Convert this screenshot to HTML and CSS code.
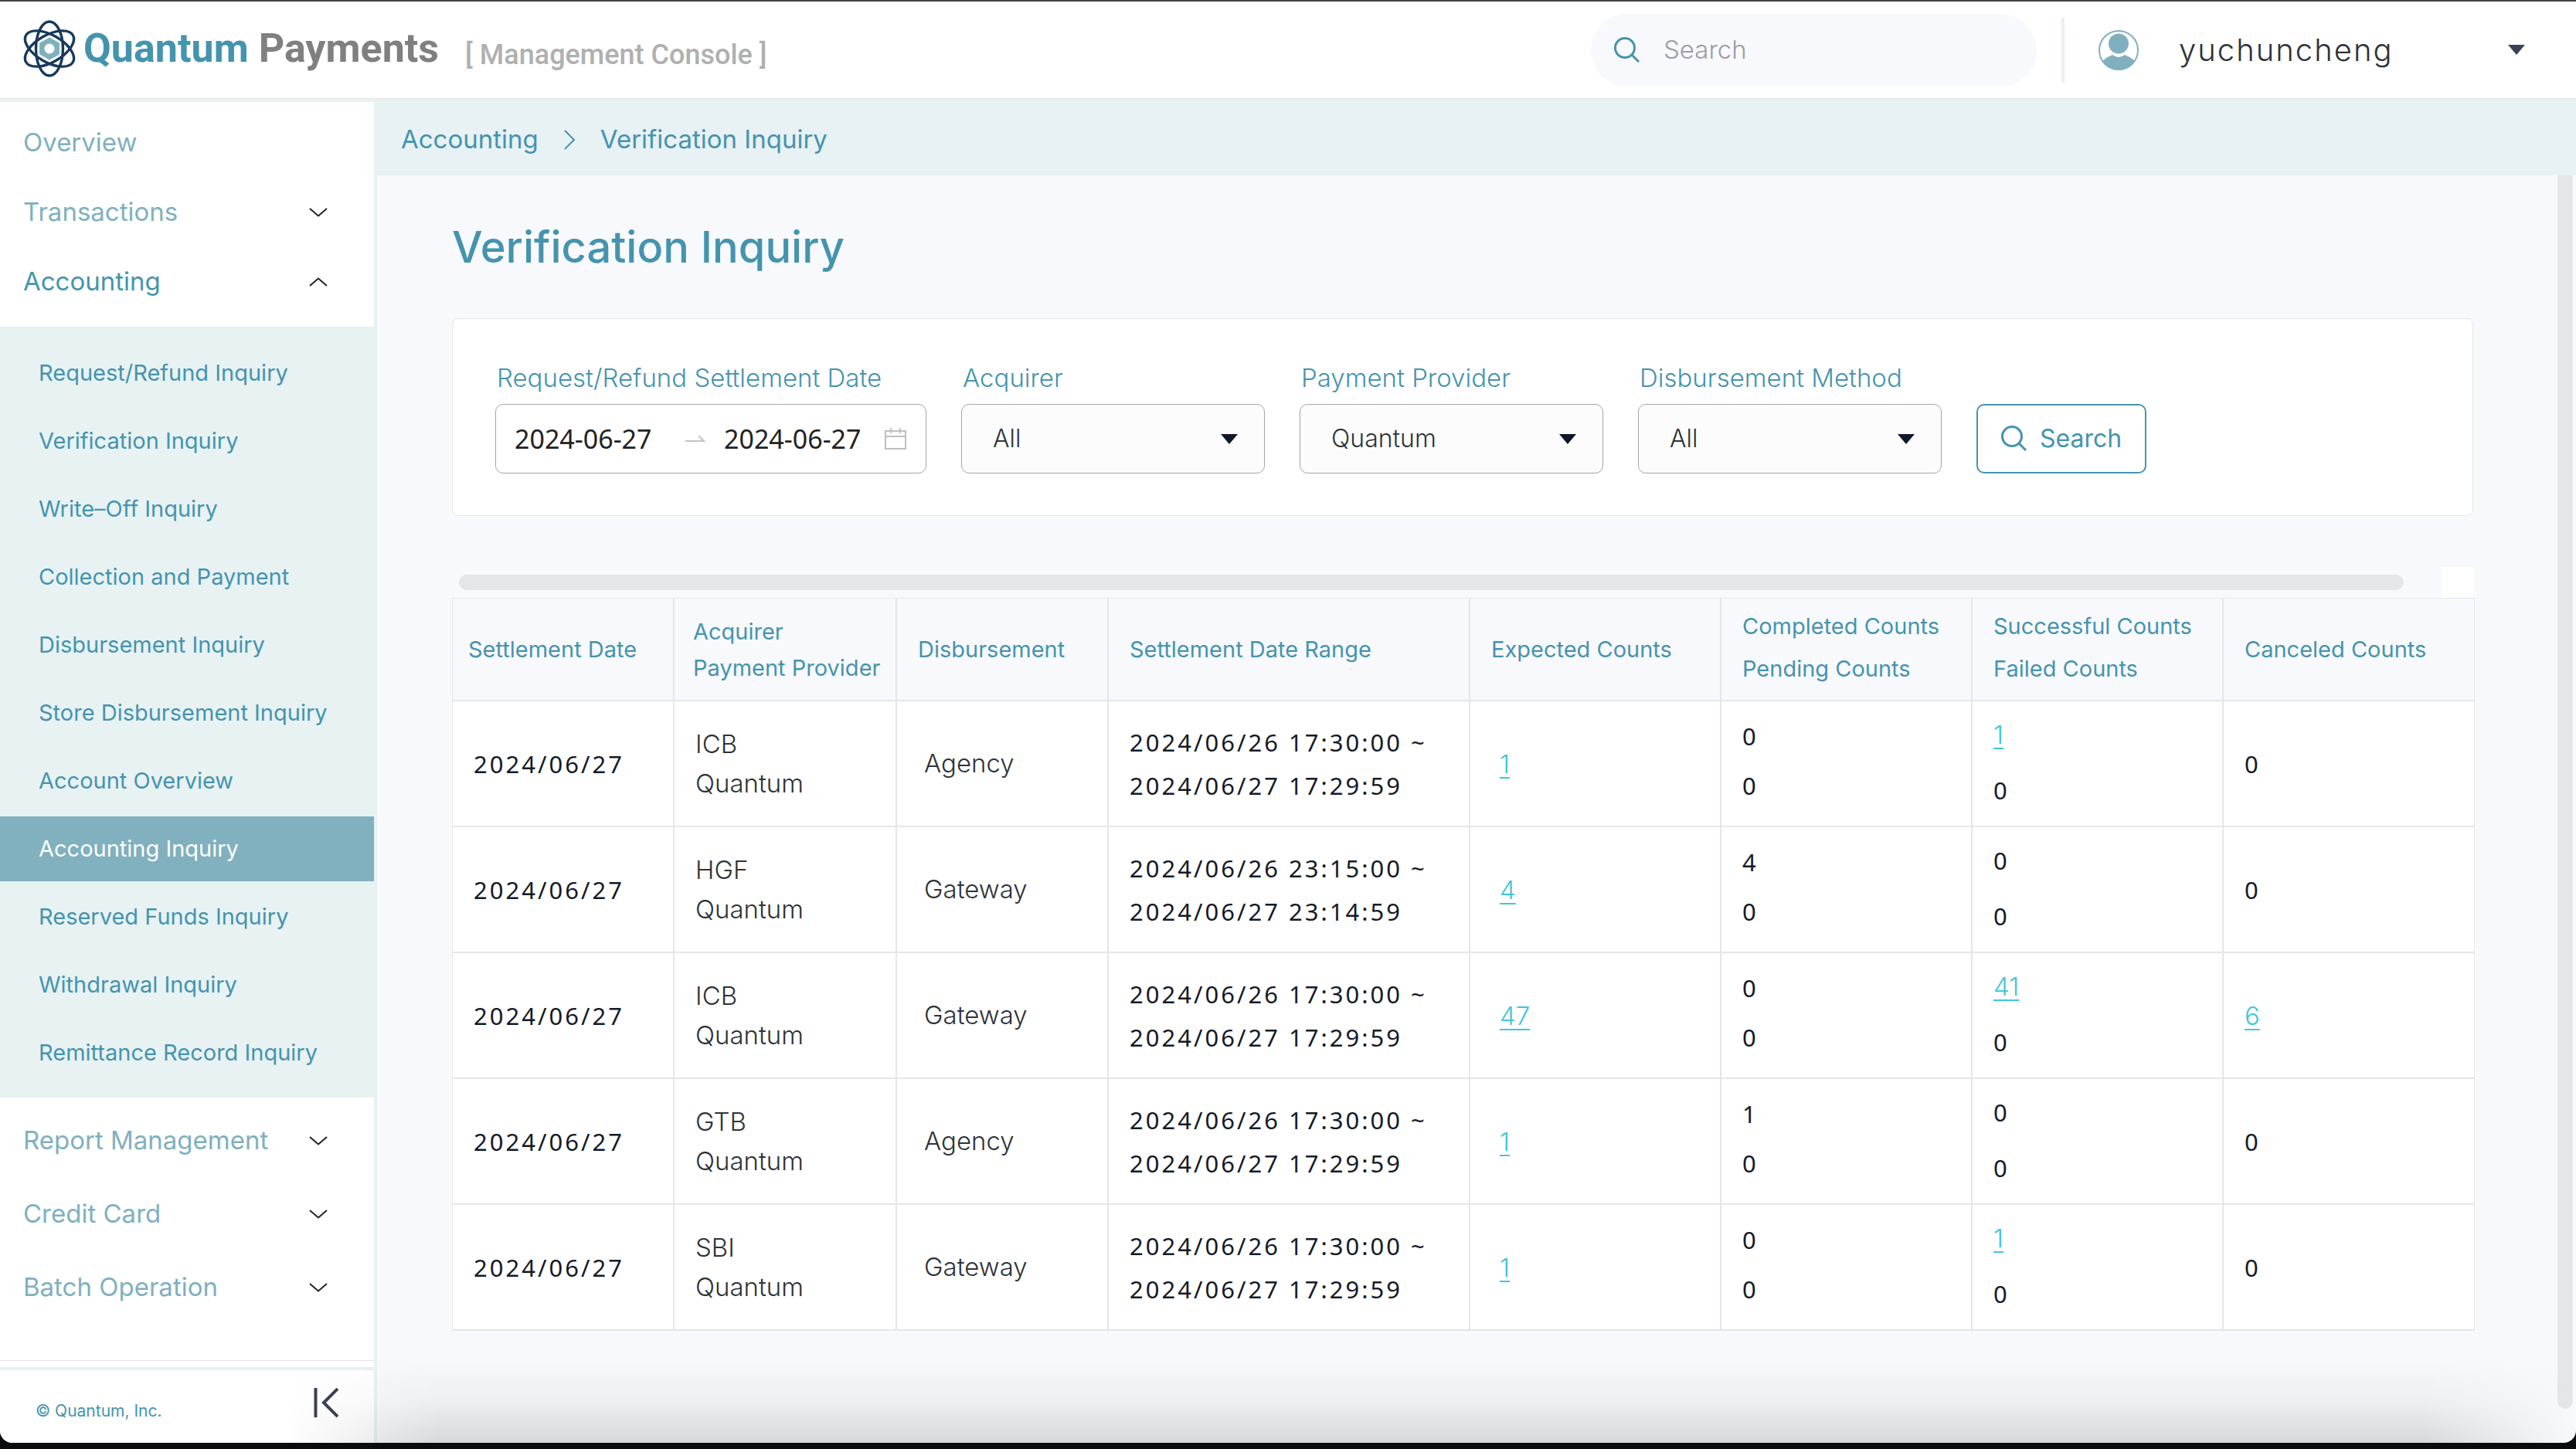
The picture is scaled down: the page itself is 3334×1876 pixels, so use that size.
FILE: index.html
```html
<!DOCTYPE html>
<html lang="en">
<head>
<meta charset="utf-8">
<title>Verification Inquiry - Quantum Payments</title>
<link rel="stylesheet" href="styles.css">
</head>
<body>
<svg class="sprite" aria-hidden="true">
  <symbol id="chevron" viewBox="0 0 24 12"><path d="M1 1 L12 10.500 L23 1" fill="none" stroke="currentColor" stroke-width="2"/></symbol>
  <symbol id="caret" viewBox="0 0 22 13"><path d="M0 0 H22 L11 13 Z" fill="currentColor"/></symbol>
  <symbol id="lens" viewBox="0 0 34 34"><circle cx="14" cy="14" r="12.500" fill="none" stroke="currentColor" stroke-width="3"/><path d="M23 23 L32 32" stroke="currentColor" stroke-width="3"/></symbol>
</svg>
<div class="app">
  <header class="topbar">
    <a class="brand" href="#">
      <svg class="brand-mark" viewBox="0 0 68 74" aria-hidden="true">
        <g fill="none" stroke="#16395b" stroke-width="3.400">
          <ellipse cx="34" cy="37" rx="17.500" ry="35"/>
          <ellipse cx="34" cy="37" rx="17.500" ry="35" transform="rotate(60 34 37)"/>
          <ellipse cx="34" cy="37" rx="17.500" ry="35" transform="rotate(-60 34 37)"/>
        </g>
        <path d="M34 24 L45.500 30.500 V43.500 L34 50 L22.500 43.500 V30.500 Z" fill="#80b0be" stroke="#80b0be" stroke-width="3" stroke-linejoin="round"/>
        <circle cx="34" cy="37" r="6.500" fill="#fff"/>
      </svg>
      <span class="brand-name">Quantum <span class="brand-second">Payments</span></span>
      <span class="brand-console">[ Management Console ]</span>
    </a>
    <label class="search">
      <svg class="search-icon"><use href="#lens"/></svg>
      <input type="search" placeholder="Search" aria-label="Search">
    </label>
    <button class="user" type="button">
      <svg class="avatar" viewBox="0 0 52 52" aria-hidden="true">
        <circle cx="26" cy="26" r="25" fill="#fff" stroke="#80b0be" stroke-width="2"/>
        <circle cx="26" cy="17.500" r="13" fill="#80b0be"/>
        <path d="M5.500 40 Q10 35 18 32 Q26 38 34 32 Q42 35 46.500 40 A25 25 0 0 1 5.500 40 Z" fill="#80b0be"/>
      </svg>
      <span class="user-name">yuchuncheng</span>
      <svg class="caret"><use href="#caret"/></svg>
    </button>
  </header>

  <div class="body">
    <nav class="sidebar" aria-label="Main">
      <div class="nav-group">
        <a class="nav-item" href="#">Overview</a>
        <button class="nav-item" type="button">Transactions<svg class="chevron"><use href="#chevron"/></svg></button>
        <button class="nav-item open" type="button" aria-expanded="true">Accounting<svg class="chevron"><use href="#chevron"/></svg></button>
      </div>
      <ul class="submenu">
        <li><a href="#">Request/Refund Inquiry</a></li>
        <li><a href="#">Verification Inquiry</a></li>
        <li><a href="#">Write–Off Inquiry</a></li>
        <li><a href="#">Collection and Payment</a></li>
        <li><a href="#">Disbursement Inquiry</a></li>
        <li><a href="#">Store Disbursement Inquiry</a></li>
        <li><a href="#">Account Overview</a></li>
        <li><a class="active" href="#">Accounting Inquiry</a></li>
        <li><a href="#">Reserved Funds Inquiry</a></li>
        <li><a href="#">Withdrawal Inquiry</a></li>
        <li><a href="#">Remittance Record Inquiry</a></li>
      </ul>
      <div class="nav-group lower">
        <button class="nav-item" type="button">Report Management<svg class="chevron"><use href="#chevron"/></svg></button>
        <button class="nav-item" type="button">Credit Card<svg class="chevron"><use href="#chevron"/></svg></button>
        <button class="nav-item" type="button">Batch Operation<svg class="chevron"><use href="#chevron"/></svg></button>
      </div>
      <div class="sidebar-foot">
        <span class="copyright">© Quantum, Inc.</span>
        <button class="collapse" type="button" aria-label="Collapse sidebar">
          <svg viewBox="0 0 32 38"><path d="M2.500 0 V38 M31 1 L13 19 L31 37" fill="none" stroke="currentColor" stroke-width="4"/></svg>
        </button>
      </div>
    </nav>

    <div class="page">
      <nav class="crumbs" aria-label="Breadcrumb">
        <a href="#">Accounting</a>
        <svg viewBox="0 0 16 26" aria-hidden="true"><path d="M2 1 L14 13 L2 25" fill="none" stroke="currentColor" stroke-width="2"/></svg>
        <a href="#">Verification Inquiry</a>
      </nav>
      <div class="scroller">
        <main class="content">
          <h1>Verification Inquiry</h1>
          <form class="filters">
            <div class="field range">
              <label for="from">Request/Refund Settlement Date</label>
              <div class="control dates">
                <input id="from" type="text" value="2024-06-27">
                <svg class="arrow" viewBox="0 0 26 10" aria-hidden="true"><path d="M0 8 H24 L17 1" fill="none" stroke="currentColor" stroke-width="2"/></svg>
                <input id="to" type="text" value="2024-06-27" aria-label="Settlement date to">
                <svg class="calendar" viewBox="0 0 28 28" aria-hidden="true"><path d="M1 4 H27 V27 H1 Z M1 11 H27 M8 0 V7 M20 0 V7" fill="none" stroke="currentColor" stroke-width="2"/></svg>
              </div>
            </div>
            <div class="field">
              <label for="acquirer">Acquirer</label>
              <div class="control pick"><select id="acquirer"><option>All</option></select><svg class="caret"><use href="#caret"/></svg></div>
            </div>
            <div class="field">
              <label for="provider">Payment Provider</label>
              <div class="control pick"><select id="provider"><option>Quantum</option></select><svg class="caret"><use href="#caret"/></svg></div>
            </div>
            <div class="field">
              <label for="method">Disbursement Method</label>
              <div class="control pick"><select id="method"><option>All</option></select><svg class="caret"><use href="#caret"/></svg></div>
            </div>
            <button class="submit" type="submit"><svg><use href="#lens"/></svg>Search</button>
          </form>

          <div class="hscroll"><div class="hthumb"></div><div class="hcorner"></div></div>
          <table>
            <colgroup>
              <col class="c-date"><col class="c-acq"><col class="c-dis"><col class="c-range"><col class="c-num"><col class="c-num"><col class="c-num"><col class="c-num">
            </colgroup>
            <thead>
              <tr>
                <th scope="col">Settlement Date</th>
                <th scope="col" class="tight"><span>Acquirer</span><span>Payment Provider</span></th>
                <th scope="col">Disbursement</th>
                <th scope="col">Settlement Date Range</th>
                <th scope="col">Expected Counts</th>
                <th scope="col" class="raised"><span>Completed Counts</span><span>Pending Counts</span></th>
                <th scope="col" class="raised"><span>Successful Counts</span><span>Failed Counts</span></th>
                <th scope="col">Canceled Counts</th>
              </tr>
            </thead>
            <tbody>
              <tr>
                <td class="stamp">2024/06/27</td>
                <td class="party"><span>ICB</span><span>Quantum</span></td>
                <td class="kind">Agency</td>
                <td class="stamp"><span>2024/06/26 17:30:00 ~</span><span>2024/06/27 17:29:59</span></td>
                <td class="expected"><a href="#">1</a></td>
                <td class="done"><span>0</span><span>0</span></td>
                <td class="result"><span><a href="#">1</a></span><span>0</span></td>
                <td>0</td>
              </tr>
              <tr>
                <td class="stamp">2024/06/27</td>
                <td class="party"><span>HGF</span><span>Quantum</span></td>
                <td class="kind">Gateway</td>
                <td class="stamp"><span>2024/06/26 23:15:00 ~</span><span>2024/06/27 23:14:59</span></td>
                <td class="expected"><a href="#">4</a></td>
                <td class="done"><span>4</span><span>0</span></td>
                <td class="result"><span>0</span><span>0</span></td>
                <td>0</td>
              </tr>
              <tr>
                <td class="stamp">2024/06/27</td>
                <td class="party"><span>ICB</span><span>Quantum</span></td>
                <td class="kind">Gateway</td>
                <td class="stamp"><span>2024/06/26 17:30:00 ~</span><span>2024/06/27 17:29:59</span></td>
                <td class="expected"><a href="#">47</a></td>
                <td class="done"><span>0</span><span>0</span></td>
                <td class="result"><span><a href="#">41</a></span><span>0</span></td>
                <td><a href="#">6</a></td>
              </tr>
              <tr>
                <td class="stamp">2024/06/27</td>
                <td class="party"><span>GTB</span><span>Quantum</span></td>
                <td class="kind">Agency</td>
                <td class="stamp"><span>2024/06/26 17:30:00 ~</span><span>2024/06/27 17:29:59</span></td>
                <td class="expected"><a href="#">1</a></td>
                <td class="done"><span>1</span><span>0</span></td>
                <td class="result"><span>0</span><span>0</span></td>
                <td>0</td>
              </tr>
              <tr>
                <td class="stamp">2024/06/27</td>
                <td class="party"><span>SBI</span><span>Quantum</span></td>
                <td class="kind">Gateway</td>
                <td class="stamp"><span>2024/06/26 17:30:00 ~</span><span>2024/06/27 17:29:59</span></td>
                <td class="expected"><a href="#">1</a></td>
                <td class="done"><span>0</span><span>0</span></td>
                <td class="result"><span><a href="#">1</a></span><span>0</span></td>
                <td>0</td>
              </tr>
            </tbody>
          </table>
        </main>
        <div class="vtrack"></div>
      </div>
    </div>
  </div>
  <div class="shade"></div>
</div>
</body>
</html>
```
FILE: styles.css
```css
:root {
  --teal: #4594ae;
  --teal-soft: #80b0be;
  --mist: #e8f2f3;
  --paper: #f8f9fd;
  --line: #e5e6ea;
  --ink: #2d3338;
  --sans: Inter, "Noto Sans", sans-serif;
  --digits: "Noto Sans", "Open Sans", sans-serif;
}

* { box-sizing: border-box; }

body {
  margin: 0;
  padding-bottom: 8px;
  background: #0b0c0d;
  font: 400 32px/1.2 var(--sans);
  color: var(--ink);
}

a { color: inherit; text-decoration: none; }
button, input, select { font: inherit; color: inherit; border: 0; background: none; padding: 0; margin: 0; outline: 0; }
button { cursor: pointer; }
svg { display: block; flex: none; }
.sprite { position: absolute; width: 0; height: 0; }

.app {
  position: relative;
  display: flex;
  flex-direction: column;
  min-height: calc(100vh - 8px);
  border-radius: 0 0 16px 16px;
  background: var(--paper);
  overflow: hidden;
}

/* Top bar */
.topbar {
  display: flex;
  align-items: center;
  height: 128px;
  padding-right: 66px;
  border-top: 2px solid #444;
  border-bottom: 1px solid #e3e5e6;
  background: #fff;
}
.brand { display: flex; align-items: center; margin-left: 30px; margin-right: auto; padding-bottom: 4px; }
.brand-mark { width: 68px; height: 74px; }
.brand-name { margin-left: 10px; font: 700 52px/74px Roboto, sans-serif; color: var(--teal); }
.brand-second { color: #808080; }
.brand-console { margin-left: 34px; padding-top: 16px; font: 500 36px/60px Roboto, sans-serif; color: #b0b0b0; }
.search {
  display: flex;
  align-items: center;
  gap: 30px;
  width: 577px;
  height: 94px;
  padding: 0 30px;
  border-radius: 47px;
  background: var(--paper);
}
.search-icon { width: 34px; height: 34px; color: var(--teal); }
.search input { flex: 1; min-width: 0; font-size: 33px; font-weight: 300; }
.search input::placeholder { color: #9a9da5; opacity: 1; }
.user {
  display: flex;
  align-items: center;
  width: 600px;
  height: 84px;
  margin-left: 32px;
  padding-left: 44px;
  border-left: 4px solid var(--mist);
}
.avatar { width: 52px; height: 52px; }
.user-name { margin-left: 52px; margin-right: auto; font-size: 40px; letter-spacing: 2px; font-weight: 300; }
.caret { width: 22px; height: 13px; color: #0f1729; }
.user .caret { color: #3b4256; }

.body { display: flex; flex: 1; }

/* Sidebar */
.sidebar {
  display: flex;
  flex-direction: column;
  flex: none;
  width: 488px;
  border-top: 4px solid var(--mist);
  border-right: 4px solid var(--mist);
  background: #fff;
}
.nav-group { padding: 8px 0 13px; }
.nav-item {
  display: flex;
  align-items: center;
  justify-content: space-between;
  width: 100%;
  height: 90px;
  padding: 0 60px 0 30px;
  font-size: 33px;
  color: var(--teal-soft);
}
.nav-item.open { color: var(--teal); }
.chevron { width: 24px; height: 12px; color: #1b2230; }
.open .chevron { transform: rotate(180deg); }
.lower { flex: 1; border-bottom: 1px solid #e6e8e9; }
.lower .nav-item { height: 95px; }
.submenu { margin: 0; padding: 18px 0 12px; list-style: none; background: var(--mist); }
.submenu a {
  display: flex;
  align-items: center;
  height: 84px;
  margin: 0 0 4px;
  padding-left: 50px;
  font-size: 29px;
  color: var(--teal);
}
.submenu .active { background: #81b0be; color: #fff; }
.sidebar-foot {
  display: flex;
  align-items: center;
  justify-content: space-between;
  height: 98px;
  margin-top: 8px;
  padding: 0 46px;
  border-top: 4px solid var(--mist);
  font-size: 21px;
  color: var(--teal);
}
.copyright { padding-top: 12px; }
.collapse { padding-bottom: 10px; }
.collapse svg { width: 32px; height: 38px; color: #3b4256; }

/* Page */
.page { display: flex; flex-direction: column; flex: 1; min-width: 0; }
.crumbs {
  display: flex;
  align-items: center;
  gap: 32px;
  height: 99px;
  padding: 6px 31px 0;
  background: #e8f1f3;
  font-size: 33px;
  color: var(--teal);
}
.crumbs svg { width: 16px; height: 26px; }
.scroller { display: flex; flex: 1; padding-right: 4px; }
.content { flex: 1; min-width: 0; padding: 56px 109px 0 97px; }
.vtrack { width: 20px; margin-bottom: 44px; border-radius: 0 0 10px 10px; background: #e5e6ea; }
h1 { margin: 0; font-size: 56px; line-height: 74px; font-weight: 500; color: var(--teal); }

.filters {
  display: flex;
  align-items: flex-end;
  gap: 45px;
  margin: 55px 0 66px;
  padding: 52px 55px 54px;
  border: 1px solid var(--line);
  border-radius: 8px;
  background: #fff;
}
.field { width: 393px; }
.range { width: 558px; }
.field label { display: block; padding-left: 2px; line-height: 48px; margin-bottom: 10px; font-size: 33px; font-weight: 300; color: var(--teal); white-space: nowrap; }
.control { height: 90px; border: 1px solid #a2a5aa; border-radius: 10px; background: #fff; }
.dates { display: flex; align-items: center; gap: 24px; padding: 0 25px 0 24px; font-family: var(--digits); font-size: 34px; color: #222; }
.dates input { width: 184px; }
.dates input:first-child { flex: 1; min-width: 0; }
.arrow { width: 26px; height: 10px; color: #c4c4c4; }
.calendar { width: 28px; height: 28px; color: #bfbfbf; }
.pick { display: grid; align-items: center; background: #fcfcfd; }
.pick select { grid-area: 1 / 1; width: 100%; height: 100%; padding-left: 40px; appearance: none; font-weight: 300; }
.pick .caret { grid-area: 1 / 1; justify-self: end; margin-right: 34px; pointer-events: none; }
.submit {
  display: flex;
  align-items: center;
  justify-content: center;
  gap: 16px;
  width: 220px;
  height: 90px;
  border: 2px solid var(--teal);
  border-radius: 10px;
  color: var(--teal);
}
.submit svg { width: 34px; height: 34px; }

/* Results */
.hscroll { display: flex; justify-content: space-between; height: 40px; }
.hthumb { align-self: center; width: 2517px; max-width: 97%; height: 20px; margin-left: 9px; border-radius: 10px; background: #e5e6ea; }
.hcorner { width: 41px; background: #fff; }
table {
  width: 100%;
  table-layout: fixed;
  border-collapse: separate;
  border-spacing: 0;
  border-top: 1px solid var(--line);
  border-left: 1px solid var(--line);
}
.c-date { width: 287px; }
.c-acq { width: 288px; }
.c-dis { width: 274px; }
.c-range { width: 468px; }
.c-num { width: 325px; }
th, td { border-right: 2px solid var(--line); border-bottom: 2px solid var(--line); text-align: left; vertical-align: middle; white-space: nowrap; }
th:last-child, td:last-child { border-right-width: 1px; }
th span, td span { display: block; }
th { height: 133px; padding: 0 0 0 27px; font-size: 29px; font-weight: 400; line-height: 55px; color: var(--teal); }
th:first-child { padding-left: 20px; }
th.tight { line-height: 47px; padding-left: 24px; }
th.raised { padding-bottom: 6px; }
td { height: 163px; padding: 0 0 0 27px; background: #fff; font: 400 31px/56px var(--digits); color: #141b29; }
.stamp { letter-spacing: 3px; }
.party { font: 300 33px/51px var(--sans); color: var(--ink); }
.kind { padding-left: 35px; font: 300 33px/51px var(--sans); color: var(--ink); }
.expected { padding-left: 38px; }
.done { padding-bottom: 8px; line-height: 64px; }
.result { padding-bottom: 4px; line-height: 72px; }
td a { font-family: var(--sans); font-weight: 300; font-size: 33px; color: #3fc6dc; text-decoration: underline; text-decoration-thickness: 2px; text-underline-offset: 5px; }

/* Soft shadow cast along the lower edge of the window */
.shade {
  position: absolute;
  inset: auto 0 0 370px;
  height: 110px;
  pointer-events: none;
  background: linear-gradient(to bottom, rgb(0 0 0 / 0), rgb(0 0 0 / 4%) 50%, rgb(0 0 0 / 13%));
  mask-image: linear-gradient(to right, transparent, #000 200px calc(100% - 200px), transparent);
}
```
